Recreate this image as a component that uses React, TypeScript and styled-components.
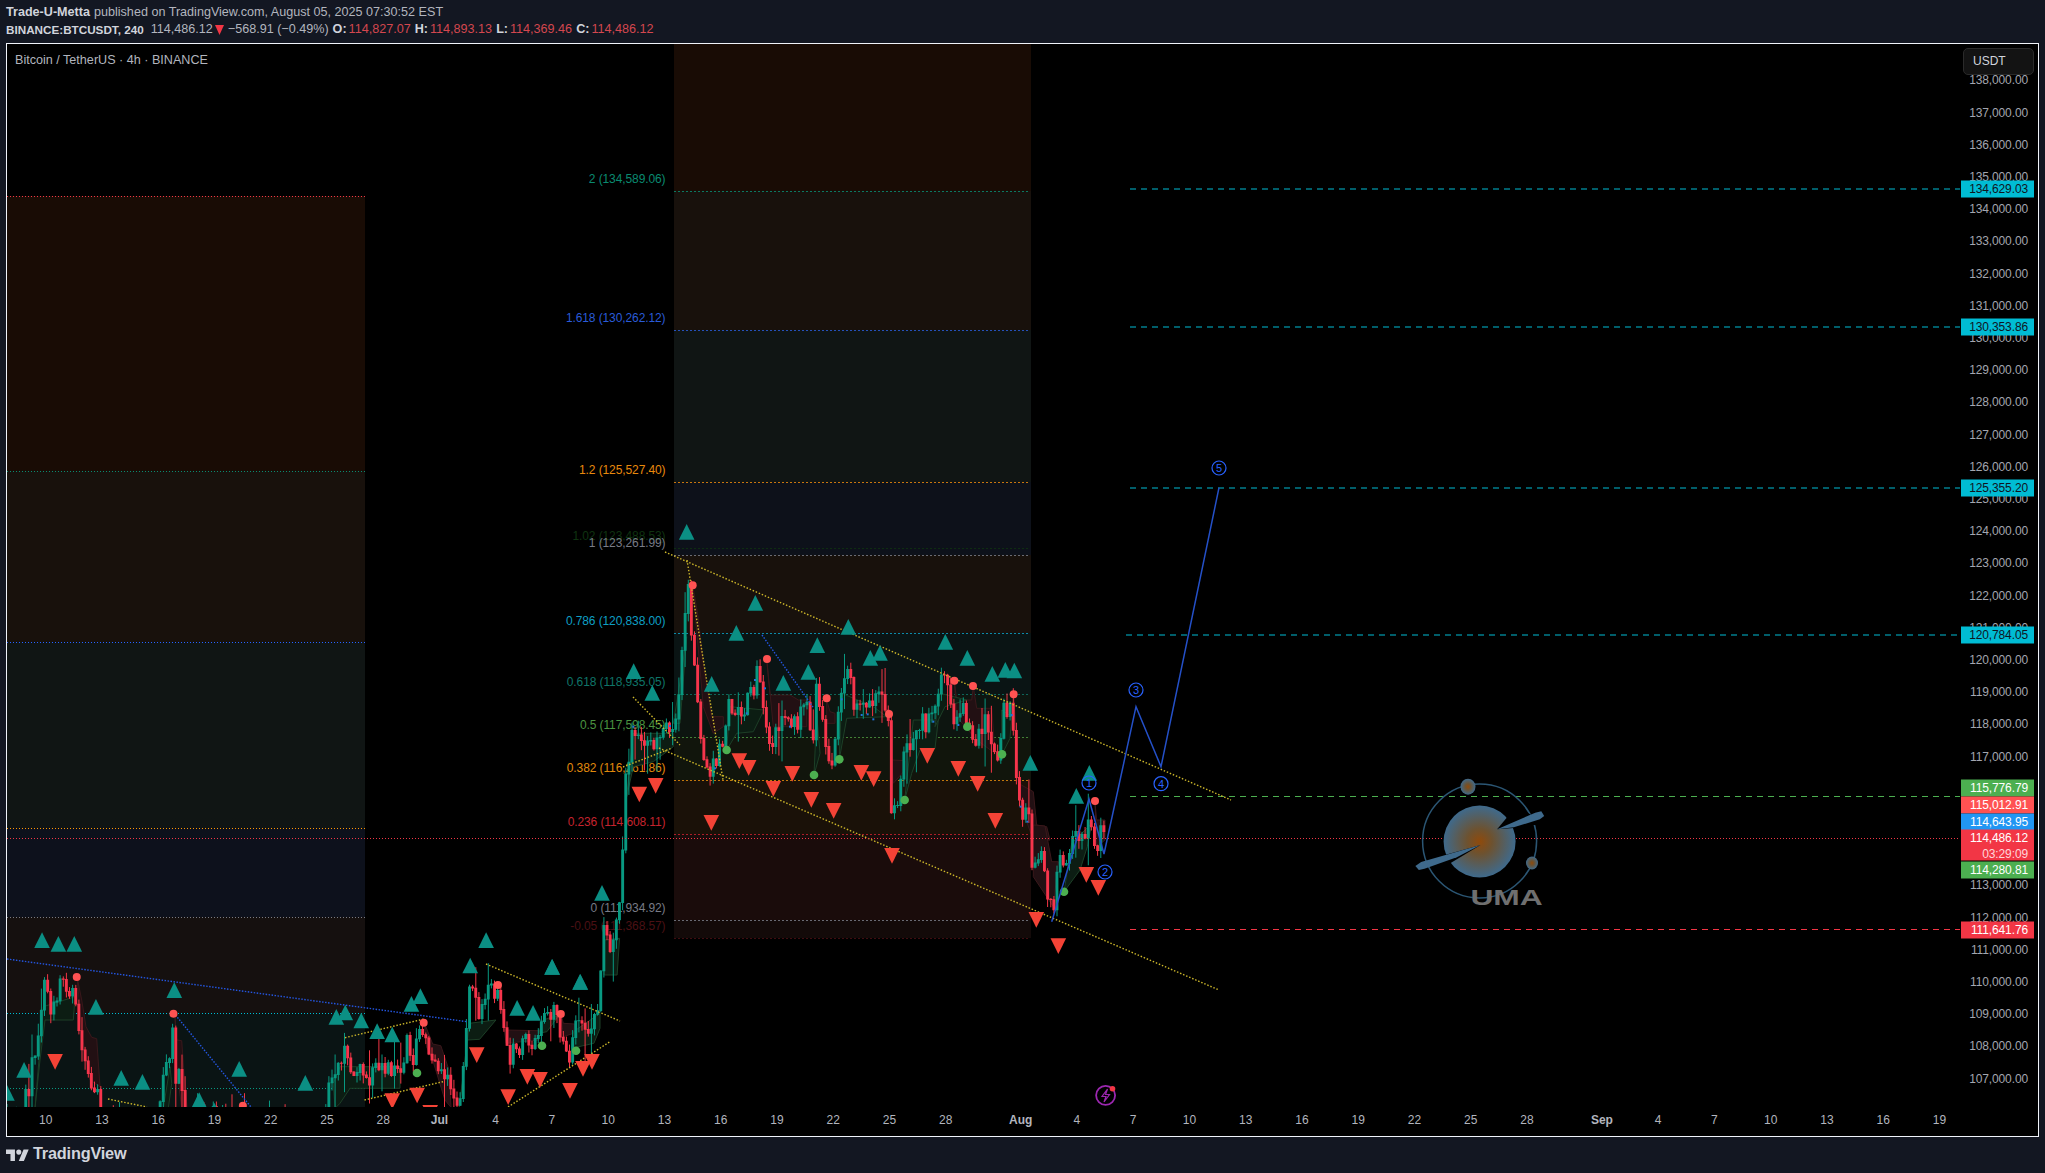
import React from "react";
import styled, { createGlobalStyle } from "styled-components";

type Pt = [number, number];

const PLOT = { left: 7, top: 44, width: 1953, height: 1063 };

// price scale of the axis, px on the page
const priceY = (p: number) => 112.5 + (137000 - p) * 0.0322;
// time scale, days counted from 10 Jun
const dayX = (d: number) => 45.7 + 18.75 * d;

const TEAL = "#0b8f84";
const RED = "#f44336";

// zoomed crops -> page coordinates
const fromA = (pts: Pt[]): Pt[] => pts.map(([x, y]) => [540 + x / 3, 520 + y / 3]);
const fromB = (pts: Pt[]): Pt[] => pts.map(([x, y]) => [x / 3, 800 + y / 3]);
const fromC = (pts: Pt[]): Pt[] => pts.map(([x, y]) => [x / 2.45, 900 + y / 3]);
const fromD = (pts: Pt[]): Pt[] => pts.map(([x, y]) => [1000 + x / 3, 640 + y / 3]);
const fromL = (pts: Pt[]): Pt[] => pts.map(([x, y]) => [1300 + x / 2.105, 740 + y / 3]);
const toPoints = (pts: Pt[]) => pts.map(([x, y]) => `${x.toFixed(1)},${y.toFixed(1)}`).join(" ");

const PATH: Pt[] = [
  [7, 1125], [20, 1110], [24, 1102], [30, 1085], [33, 1055], [40, 1028], [43, 973], [50, 1007], [55, 1000], [62, 973], [68, 1000],
  [75, 990], [78, 1022], [83, 1052], [90, 1083], [97, 1087], [100, 1112], [150, 1130], [160, 1107], [163, 1077], [168, 1065],
  [172, 1025], [175, 1085], [180, 1060], [183, 1112], [320, 1130], [327, 1103], [333, 1072], [340, 1055], [345, 1052],
  [353, 1068], [360, 1060], [368, 1083], [377, 1070], [390, 1066], [404, 1060], [408, 1035], [412, 1070], [418, 1030],
  [425, 1040], [433, 1065], [445, 1070], [452, 1100], [457, 1115], [461, 1100], [467, 1023], [470, 992], [480, 1015],
  [490, 990], [498, 1000], [508, 1060], [520, 1043], [539, 1043], [543, 1020], [555, 1003], [560, 1040], [571, 1058],
  [575, 1030], [590, 1030], [600, 1000], [602, 927], [607, 945], [614, 945], [618, 905], [622, 877], [624, 800], [628, 760],
  [630, 740], [640, 735], [655, 740], [673, 718], [680, 700], [683, 640], [687, 572], [691, 620], [695, 663], [703, 753],
  [710, 777], [717, 755], [722, 740], [728, 700], [733, 705], [740, 720], [743, 710], [753, 693], [758, 653], [767, 730],
  [773, 747], [780, 717], [793, 727], [807, 703], [812, 748], [817, 682], [827, 765], [833, 752], [840, 688], [848, 663],
  [853, 705], [868, 717], [870, 702], [880, 690], [888, 713], [890, 808], [897, 810], [902, 768], [905, 737], [913, 747],
  [918, 720], [933, 723], [940, 680], [947, 680], [955, 720], [965, 710], [973, 743], [980, 727], [988, 723], [997, 758],
  [1003, 710], [1010, 713], [1013, 715], [1018, 797], [1023, 817], [1028, 810], [1033, 877], [1038, 857], [1043, 857],
  [1048, 892], [1053, 912], [1055, 900], [1058, 867], [1065, 857], [1070, 843], [1076, 837], [1083, 832], [1088, 822],
  [1095, 845], [1098, 853], [1102, 827], [1106, 838],
];

const interpolate = (x: number) => {
  for (let i = 1; i < PATH.length; i++) {
    if (x <= PATH[i][0]) {
      const [x0, y0] = PATH[i - 1];
      const [x1, y1] = PATH[i];
      return y0 + ((y1 - y0) * (x - x0)) / (x1 - x0);
    }
  }
  return PATH[PATH.length - 1][1];
};

let seed = 4127;
const rnd = () => {
  seed = (seed * 16807) % 2147483647;
  return seed / 2147483647;
};

const buildCandles = () => {
  const up = { body: "", wick: "" };
  const down = { body: "", wick: "" };
  let prev = interpolate(7);
  for (let x = 7; x <= 1106; x += 3.125) {
    const end = x >= 1104;
    const close = end ? 838 : interpolate(x) + (rnd() - 0.5) * 22;
    const top = Math.min(prev, close);
    const bottom = Math.max(prev, close) + 0.8;
    const long = rnd() > 0.78;
    const hi = top - rnd() * (long ? 28 : 8);
    const lo = bottom + rnd() * (long ? 34 : 9);
    const side = close < prev ? up : down;
    side.body += `M${(x - 1.45).toFixed(1)} ${top.toFixed(1)}h2.9V${bottom.toFixed(1)}h-2.9z`;
    side.wick += `M${x.toFixed(1)} ${hi.toFixed(1)}V${lo.toFixed(1)}`;
    prev = close;
  }
  return { up, down };
};
const CANDLES = buildCandles();

const RED_RIBBONS: Pt[][] = [
  fromB([[232, 535], [245, 600], [258, 680], [275, 712], [290, 716], [300, 860], [270, 840], [245, 700]]),
  fromB([[525, 650], [530, 720], [545, 722], [555, 860], [562, 925], [545, 925], [530, 800]]),
  fromC([[1040, 370], [1060, 432], [1080, 437], [1100, 510], [1105, 622], [1090, 600], [1060, 480], [1045, 440]]),
  fromC([[1222, 260], [1238, 390], [1320, 392], [1320, 420], [1240, 430]]),
  fromC([[1375, 345], [1380, 370], [1408, 372], [1405, 400], [1380, 410]]),
  fromA([[458, 196], [475, 295], [490, 430], [515, 590], [550, 590], [550, 620], [520, 640], [490, 560]]),
  fromA([[680, 417], [690, 525], [750, 525], [775, 540], [800, 540], [800, 620], [700, 620]]),
  fromA([[860, 540], [870, 575], [885, 580], [885, 610], [860, 610]]),
  fromA([[1047, 582], [1055, 720], [1095, 722], [1095, 750], [1060, 790]]),
  fromA([[1243, 482], [1250, 540], [1295, 540], [1300, 500], [1310, 565], [1355, 565], [1365, 700], [1310, 660], [1250, 590]]),
  fromA([[1421, 523], [1435, 790], [1480, 815], [1490, 915], [1520, 920], [1530, 960], [1480, 960], [1440, 850]]),
  fromD([[100, 555], [135, 558], [155, 665], [175, 665], [160, 800], [100, 710]]),
  fromD([[285, 490], [290, 540], [315, 540], [315, 600], [290, 620]]),
];

const GREEN_RIBBONS: Pt[][] = [
  fromB([[105, 925], [120, 780], [135, 660], [220, 660], [225, 590], [130, 620]]),
  fromB([[490, 925], [510, 800], [515, 850], [505, 925]]),
  fromB([[1005, 925], [1020, 910], [1050, 865], [1200, 865], [1200, 800], [1020, 800], [1000, 850]]),
  fromC([[1125, 622], [1140, 490], [1145, 420], [1175, 418], [1215, 360], [1150, 370]]),
  fromC([[1320, 400], [1340, 395], [1370, 345], [1330, 360]]),
  fromC([[1400, 445], [1455, 430], [1470, 385], [1470, 340], [1405, 395]]),
  fromC([[1480, 225], [1512, 225], [1518, 115], [1480, 120]]),
  fromA([[260, 830], [280, 740], [340, 725], [400, 680], [400, 640], [280, 640]]),
  fromA([[420, 610], [440, 350], [415, 520], [400, 610]]),
  fromA([[560, 690], [590, 640], [640, 635], [672, 570], [570, 560]]),
  fromA([[822, 765], [840, 700], [830, 580]]),
  fromA([[898, 718], [920, 595], [1040, 590], [1000, 560], [905, 520]]),
  fromA([[1094, 840], [1115, 760], [1140, 690], [1185, 685], [1195, 600], [1120, 600]]),
  fromA([[1185, 620], [1215, 560], [1280, 540], [1200, 520]]),
  fromA([[1386, 703], [1410, 655], [1415, 590], [1385, 570]]),
  fromD([[192, 755], [240, 690], [262, 620], [275, 550], [215, 610]]),
];

// x, top of triangle
const UP_MARKS: Pt[] = [
  ...fromA([[440, 12], [646, 225], [589, 315], [832, 352], [925, 297], [1020, 375], [991, 390], [1216, 342], [1282, 390], [1357, 438],
    [1396, 426], [1423, 428], [805, 432], [730, 465], [515, 468], [281, 430], [337, 495], [1471, 705]]),
  ...fromD([[268, 375], [229, 444]]),
  [602, 885], [552, 959], [580, 974],
  ...fromC([[103, 97], [143, 108], [182, 108], [235, 297], [427, 247], [59, 486], [297, 510], [349, 522], [17, 555], [488, 577],
    [525, 608], [586, 483], [748, 525], [824, 327], [846, 314], [885, 338], [924, 370], [961, 380], [1008, 288], [1030, 265],
    [1152, 173], [1191, 97], [1267, 300], [1306, 315], [1353, 177], [1422, 222]]),
];

const DOWN_MARKS: Pt[] = [
  ...fromA([[598, 700], [626, 720], [757, 738], [700, 783], [814, 816], [881, 849], [964, 735], [1001, 754], [1162, 684], [1255, 723],
    [1313, 768], [1366, 879], [514, 885], [298, 800], [347, 774]]),
  ...fromD([[109, 816], [259, 681], [295, 720], [175, 895]]),
  [892, 848], [592, 1054], [583, 1061], [570, 1083], [540, 1072],
  ...fromC([[135, 462], [961, 580], [1022, 563], [1054, 615], [1168, 442], [1292, 507], [1245, 568]]),
];

const RED_DOTS: Pt[] = [
  ...fromA([[458, 196], [681, 417], [860, 535], [1047, 582], [1243, 482], [1299, 498], [1421, 523]]),
  [1095, 801],
  ...fromC([[188, 231], [425, 341], [595, 617], [1038, 368], [1220, 255], [1374, 342]]),
];

const GREEN_DOTS: Pt[] = [
  ...fromA([[560, 690], [822, 765], [898, 718], [1094, 840], [1282, 620], [1386, 703]]),
  [1064, 891.7], [417, 1073], [542, 1045.7], [576, 1050.7],
];

const BLUE_TICKS: Pt[] = fromA([[280, 620], [390, 618], [525, 745], [620, 580], [645, 480], [675, 505], [750, 620], [905, 538], [965, 585],
  [983, 583], [1000, 598], [1180, 605], [1255, 615], [1415, 585], [1442, 860], [1462, 905]]);

const YELLOW_LINES: [number, number, number, number][] = [
  [665, 552, 1231, 800],
  [659, 748, 1219, 990],
  [633, 697, 680, 745],
  [687, 560, 723, 780],
  [623, 767, 672, 748],
  [486, 964, 620, 1021],
  [508, 1107, 610, 1041.7],
  [345, 1037.7, 424, 1019],
  [364.5, 1100, 443, 1081.7],
  [108, 1099, 147, 1107],
];

const BLUE_LINES: [number, number, number, number][] = [
  [7, 959, 467, 1021.7],
  [175.5, 1015, 251, 1107],
  [762, 635, 813, 707],
];

const FIB_BANDS = [
  { from: 44, to: 191, fill: "#190c05" },
  { from: 191, to: 330, fill: "#18110c" },
  { from: 330, to: 482, fill: "#101514" },
  { from: 482, to: 555, fill: "#0d111a" },
  { from: 555, to: 633, fill: "#18110c" },
  { from: 633, to: 694, fill: "#0a1414" },
  { from: 694, to: 737, fill: "#0d1510" },
  { from: 737, to: 780, fill: "#11150c" },
  { from: 780, to: 834, fill: "#1a1108" },
  { from: 834, to: 920, fill: "#1a0c0b" },
  { from: 920, to: 938, fill: "#130a09" },
];

const FIB_LEVELS = [
  { y: 191.5, text: "2 (134,589.06)", color: "#0a8a70" },
  { y: 330.5, text: "1.618 (130,262.12)", color: "#2a5bd8" },
  { y: 482.5, text: "1.2 (125,527.40)", color: "#e8890c" },
  { y: 548.5, text: "1.02 (123,488.53)", color: "#0f3310" },
  { y: 555.5, text: "1 (123,261.99)", color: "#787b86" },
  { y: 633.5, text: "0.786 (120,838.00)", color: "#0e9fc4" },
  { y: 694.5, text: "0.618 (118,935.05)", color: "#0f7468" },
  { y: 737.5, text: "0.5 (117,598.45)", color: "#4a9440" },
  { y: 780.5, text: "0.382 (116,261.86)", color: "#e08a0c" },
  { y: 834.5, text: "0.236 (114,608.11)", color: "#c5232e" },
  { y: 920.5, text: "0 (111,934.92)", color: "#787b86" },
  { y: 938.5, text: "-0.05 (111,368.57)", color: "#4b1014" },
];

const OLD_BANDS = [
  { from: 196, to: 471, fill: "#190c05" },
  { from: 471, to: 642, fill: "#18110c" },
  { from: 642, to: 828, fill: "#101514" },
  { from: 828, to: 917, fill: "#0d111c" },
  { from: 917, to: 1013, fill: "#15100f" },
  { from: 1013, to: 1107, fill: "#0a1414" },
];

const OLD_LINES = [
  { y: 196.5, color: "#f23645" },
  { y: 471.5, color: "#0a8a70" },
  { y: 642.5, color: "#2962ff" },
  { y: 828.5, color: "#ff9800" },
  { y: 917.5, color: "#787b86" },
  { y: 1013.5, color: "#00bcd4" },
  { y: 1088.5, color: "#089981" },
];

const TARGETS = [
  { y: 189, x: 1130, color: "#00bcd4" },
  { y: 327, x: 1130, color: "#00bcd4" },
  { y: 488, x: 1130, color: "#00bcd4" },
  { y: 635, x: 1126, color: "#00bcd4" },
  { y: 796.5, x: 1130, color: "#4caf50" },
  { y: 929.5, x: 1130, color: "#f23645" },
];

const WAVE: Pt[] = [[1051.7, 921.7], [1089, 799], [1104, 854], [1136, 706.7], [1161, 766.7], [1219, 487.7]];
const WAVE_LABELS: { x: number; y: number; n: string }[] = [
  { x: 1089, y: 783, n: "1" },
  { x: 1105, y: 872, n: "2" },
  { x: 1136, y: 690, n: "3" },
  { x: 1161, y: 783.7, n: "4" },
  { x: 1219, y: 468, n: "5" },
];

const TIME_TICKS: { d: number; label: string; month?: boolean }[] = [
  { d: 0, label: "10" }, { d: 3, label: "13" }, { d: 6, label: "16" }, { d: 9, label: "19" }, { d: 12, label: "22" },
  { d: 15, label: "25" }, { d: 18, label: "28" }, { d: 21, label: "Jul", month: true }, { d: 24, label: "4" }, { d: 27, label: "7" },
  { d: 30, label: "10" }, { d: 33, label: "13" }, { d: 36, label: "16" }, { d: 39, label: "19" }, { d: 42, label: "22" },
  { d: 45, label: "25" }, { d: 48, label: "28" }, { d: 52, label: "Aug", month: true }, { d: 55, label: "4" }, { d: 58, label: "7" },
  { d: 61, label: "10" }, { d: 64, label: "13" }, { d: 67, label: "16" }, { d: 70, label: "19" }, { d: 73, label: "22" },
  { d: 76, label: "25" }, { d: 79, label: "28" }, { d: 83, label: "Sep", month: true }, { d: 86, label: "4" }, { d: 89, label: "7" },
  { d: 92, label: "10" }, { d: 95, label: "13" }, { d: 98, label: "16" }, { d: 101, label: "19" },
];

// 116k, 115k and 114k sit fully under the price tags
const PRICE_TICKS = Array.from({ length: 32 }, (_, i) => 138000 - i * 1000).filter((p) => p < 114000 || p > 116000);

const PRICE_TAGS = [
  { y: 189, text: "134,629.03", bg: "#00bcd4", fg: "#10151f" },
  { y: 327, text: "130,353.86", bg: "#00bcd4", fg: "#10151f" },
  { y: 488, text: "125,355.20", bg: "#00bcd4", fg: "#10151f" },
  { y: 635, text: "120,784.05", bg: "#00bcd4", fg: "#10151f" },
  { y: 787.5, text: "115,776.79", bg: "#4caf50", fg: "#fff" },
  { y: 804.5, text: "115,012.91", bg: "#ff5252", fg: "#fff" },
  { y: 821.5, text: "114,643.95", bg: "#2196f3", fg: "#fff" },
  { y: 869.5, text: "114,280.81", bg: "#4caf50", fg: "#fff" },
  { y: 929.5, text: "111,641.76", bg: "#f23645", fg: "#fff" },
];

const GlobalStyle = createGlobalStyle`
  html, body {
    margin: 0;
    padding: 0;
    background: #131722;
  }
  body {
    font-family: "Liberation Sans", Arial, sans-serif;
    font-size: 12px;
  }
`;

const Page = styled.div`
  width: 2045px;
  height: 1173px;
  display: flex;
  flex-direction: column;
  background: #131722;
  overflow: hidden;
`;

const Header = styled.header`
  height: 43px;
  box-sizing: border-box;
  padding: 4px 0 0 6px;
  display: flex;
  flex-direction: column;
`;

const HeaderLine = styled.div`
  height: 17px;
  line-height: 17px;
  display: flex;
  align-items: center;
  gap: 4px;
  font-size: 12.6px;
  color: #b2b5be;
  white-space: nowrap;
`;

const Strong = styled.span<{ $small?: boolean }>`
  font-weight: 700;
  color: #d1d4dc;
  font-size: ${({ $small }) => ($small ? "11.7px" : "inherit")};
  margin-right: ${({ $small }) => ($small ? "3px" : "0")};
`;

const Group = styled.span`
  display: inline-flex;
  align-items: center;
  gap: 2px;
`;

const Quote = styled.span`
  color: #d4474f;
`;

const Frame = styled.main`
  position: relative;
  margin-left: 6px;
  width: 2033px;
  height: 1094px;
  box-sizing: border-box;
  border: 1px solid #f0f3fa;
  background: #000;
  display: flex;
`;

const ChartColumn = styled.div`
  width: ${PLOT.width}px;
  display: flex;
  flex-direction: column;
`;

const Plot = styled.svg`
  display: block;
  flex: none;
  width: ${PLOT.width}px;
  height: ${PLOT.height}px;
  font-family: "Liberation Sans", Arial, sans-serif;
  font-size: 12px;
  letter-spacing: -0.1px;
`;

const SymbolTitle = styled.div`
  position: absolute;
  left: 8px;
  top: 9px;
  color: #b2b5be;
  font-size: 12.6px;
  line-height: 15px;
`;

const TimeAxis = styled.div`
  position: relative;
  flex: 1;
`;

const TimeTick = styled.span<{ $month?: boolean }>`
  position: absolute;
  top: 6px;
  transform: translateX(-50%);
  color: #b2b5be;
  line-height: 15px;
  font-weight: ${({ $month }) => ($month ? 700 : 400)};
`;

const PriceAxis = styled.div`
  position: relative;
  flex: 1;
  overflow: hidden;
`;

const PriceTick = styled.span`
  position: absolute;
  right: 10px;
  transform: translateY(-50%);
  color: #a3a6af;
  line-height: 15px;
  letter-spacing: -0.12px;
`;

const PriceTag = styled.div<{ $bg: string; $fg: string }>`
  position: absolute;
  left: 1px;
  width: 73px;
  box-sizing: border-box;
  padding-right: 6px;
  text-align: right;
  background: ${({ $bg }) => $bg};
  color: ${({ $fg }) => $fg};
  line-height: 17px;
  letter-spacing: -0.12px;
  transform: translateY(-50%);
`;

const Countdown = styled.div`
  color: #ffd5da;
  line-height: 14px;
`;

const CurrencyButton = styled.div`
  position: absolute;
  left: 3px;
  top: 4px;
  width: 71px;
  height: 27px;
  box-sizing: border-box;
  padding-left: 9px;
  line-height: 24px;
  background: #131313;
  border: 1.5px solid #2a2a2a;
  border-radius: 5px;
  color: #d1d4dc;
`;

const Footer = styled.footer`
  flex: 1;
  display: flex;
  align-items: center;
  gap: 4px;
  padding: 0 0 3px 6px;
  color: #d1d4dc;
`;

const LogoText = styled.span`
  font-size: 16.3px;
  font-weight: 700;
  letter-spacing: -0.2px;
`;

const Triangle = ({ x, y, up }: { x: number; y: number; up: boolean }) => {
  const h = 15.7;
  const w = 7.8;
  const pts = up
    ? `${x},${y} ${x + w},${y + h} ${x - w},${y + h}`
    : `${x - w},${y} ${x + w},${y} ${x},${y + h}`;
  return <polygon points={pts} fill={up ? TEAL : RED} />;
};

function UmaLogo() {
  return (
    <g>
      <defs>
        <radialGradient id="umaCore">
          <stop offset="0%" stopColor="#8f4a0c" />
          <stop offset="35%" stopColor="#6d5230" />
          <stop offset="100%" stopColor="#3f6a8c" />
        </radialGradient>
      </defs>
      <circle cx={1479.6} cy={841} r={57} fill="none" stroke="#2b5674" strokeWidth={1.5} />
      <ellipse cx={1479.6} cy={841.5} rx={36} ry={36} fill="url(#umaCore)" />
      <polygon points={toPoints(fromL([[415, 268], [436, 232], [470, 212], [520, 250], [450, 264]]))} fill="#000" />
      <polygon points={toPoints(fromL([[380, 315], [318, 368], [296, 380], [288, 352]]))} fill="#000" />
      <polygon points={toPoints(fromL([[415, 268], [495, 218], [508, 214], [514, 228], [505, 238], [450, 262]]))} fill="#3f6a8c" />
      <polygon points={toPoints(fromL([[380, 315], [255, 366], [243, 378], [250, 390], [262, 386], [330, 352]]))} fill="#3f6a8c" />
      <ellipse cx={1468} cy={786.7} rx={7.5} ry={8} fill="url(#umaCore)" />
      <ellipse cx={1532} cy={863} rx={6} ry={6.5} fill="url(#umaCore)" />
      <text x={1470.5} y={905} fill="#6f6f6f" fontSize={22} fontWeight={700} textLength={72} lengthAdjust="spacingAndGlyphs">
        UMA
      </text>
    </g>
  );
}

function Chart() {
  return (
    <Plot viewBox={`${PLOT.left} ${PLOT.top} ${PLOT.width} ${PLOT.height}`}>
      {OLD_BANDS.map((b) => (
        <rect key={b.from} x={7} y={b.from} width={358} height={b.to - b.from} fill={b.fill} />
      ))}
      {OLD_LINES.map((l) => (
        <line key={l.y} x1={7} x2={365} y1={l.y} y2={l.y} stroke={l.color} strokeDasharray="1 2" />
      ))}
      {FIB_BANDS.map((b) => (
        <rect key={b.from} x={674} y={b.from} width={357} height={b.to - b.from} fill={b.fill} />
      ))}
      {FIB_LEVELS.map((l) => (
        <g key={l.text}>
          <line x1={674} x2={1029} y1={l.y} y2={l.y} stroke={l.color} strokeDasharray="2 2" opacity={0.85} />
          <text x={665.5} y={l.y - 8.5} textAnchor="end" fill={l.color}>
            {l.text}
          </text>
        </g>
      ))}

      {TARGETS.map((t) => (
        <line key={t.y} x1={t.x} x2={1960} y1={t.y} y2={t.y} stroke={t.color} strokeDasharray="6 5" />
      ))}

      {RED_RIBBONS.map((pts, i) => (
        <polygon key={i} points={toPoints(pts)} fill="#221013" stroke="#3a181b" />
      ))}
      {GREEN_RIBBONS.map((pts, i) => (
        <polygon key={i} points={toPoints(pts)} fill="#0c1d13" stroke="#1d3f27" />
      ))}

      <path d={CANDLES.up.wick} stroke="#089981" fill="none" />
      <path d={CANDLES.down.wick} stroke="#f23645" fill="none" />
      <path d={CANDLES.up.body} fill="#089981" />
      <path d={CANDLES.down.body} fill="#f7354c" />

      {BLUE_TICKS.map(([x, y], i) => (
        <rect key={i} x={x - 1} y={y - 1} width={2} height={2} fill="#2273d8" />
      ))}

      {BLUE_LINES.map((l, i) => (
        <line key={i} x1={l[0]} y1={l[1]} x2={l[2]} y2={l[3]} stroke="#2456e0" strokeWidth={1.4} strokeDasharray="1.5 1.5" />
      ))}
      {YELLOW_LINES.map((l, i) => (
        <line key={i} x1={l[0]} y1={l[1]} x2={l[2]} y2={l[3]} stroke="#cdb72a" strokeWidth={1.4} strokeDasharray="1.5 1.8" />
      ))}

      <line x1={7} x2={1960} y1={838.5} y2={838.5} stroke="#f23645" strokeDasharray="1 2" />

      {UP_MARKS.map(([x, y], i) => (
        <Triangle key={i} x={x} y={y} up />
      ))}
      {DOWN_MARKS.map(([x, y], i) => (
        <Triangle key={i} x={x} y={y} up={false} />
      ))}
      {RED_DOTS.map(([x, y], i) => (
        <circle key={i} cx={x} cy={y} r={4} fill="#ff5252" />
      ))}
      {GREEN_DOTS.map(([x, y], i) => (
        <circle key={i} cx={x} cy={y} r={4.3} fill="#4caf50" />
      ))}

      <polyline points={toPoints(WAVE)} fill="none" stroke="#2450c8" strokeWidth={1.5} />
      {WAVE_LABELS.map((w) => (
        <g key={w.n}>
          <circle cx={w.x} cy={w.y} r={7} fill="none" stroke="#2962ff" strokeWidth={1.2} />
          <text x={w.x} y={w.y + 4} textAnchor="middle" fontSize={11} fill="#2962ff">
            {w.n}
          </text>
        </g>
      ))}

      <UmaLogo />

      <circle cx={1105.6} cy={1095.3} r={9.5} fill="none" stroke="#9c27b0" strokeWidth={1.8} />
      <path d="M1107.5 1089 l-5.5 7.5 h4 l-2 5.5 l5.5 -7.5 h-4 z" fill="none" stroke="#9c27b0" strokeWidth={1.2} />
      <circle cx={1112.5} cy={1088.7} r={2.8} fill="#f23645" />
    </Plot>
  );
}

export default function App() {
  return (
    <Page>
      <GlobalStyle />
      <Header>
        <HeaderLine>
          <Strong>Trade-U-Metta</Strong>
          <span>published on TradingView.com, August 05, 2025 07:30:52 EST</span>
        </HeaderLine>
        <HeaderLine>
          <Strong $small>BINANCE:BTCUSDT, 240</Strong>
          <Group>
            114,486.12
            <svg width="9" height="10" viewBox="0 0 9 10">
              <polygon points="0,0 9,0 4.5,10" fill="#f23645" />
            </svg>
          </Group>
          <span>−568.91 (−0.49%)</span>
          <Group>
            <Strong>O:</Strong>
            <Quote>114,827.07</Quote>
          </Group>
          <Group>
            <Strong>H:</Strong>
            <Quote>114,893.13</Quote>
          </Group>
          <Group>
            <Strong>L:</Strong>
            <Quote>114,369.46</Quote>
          </Group>
          <Group>
            <Strong>C:</Strong>
            <Quote>114,486.12</Quote>
          </Group>
        </HeaderLine>
      </Header>
      <Frame>
        <ChartColumn>
          <Chart />
          <TimeAxis>
            {TIME_TICKS.map((t) => (
              <TimeTick key={t.d} $month={t.month} style={{ left: dayX(t.d) - PLOT.left }}>
                {t.label}
              </TimeTick>
            ))}
          </TimeAxis>
        </ChartColumn>
        <PriceAxis>
          {PRICE_TICKS.map((p) => (
            <PriceTick key={p} style={{ top: priceY(p) - PLOT.top }}>
              {p.toLocaleString("en-US")}.00
            </PriceTick>
          ))}
          {PRICE_TAGS.map((t) => (
            <PriceTag key={t.text} $bg={t.bg} $fg={t.fg} style={{ top: t.y - PLOT.top }}>
              {t.text}
            </PriceTag>
          ))}
          <PriceTag $bg="#f23645" $fg="#fff" style={{ top: 845.2 - PLOT.top }}>
            114,486.12
            <Countdown>03:29:09</Countdown>
          </PriceTag>
          <CurrencyButton>USDT</CurrencyButton>
        </PriceAxis>
        <SymbolTitle>Bitcoin / TetherUS · 4h · BINANCE</SymbolTitle>
      </Frame>
      <Footer>
        <svg width="23" height="18" viewBox="0 0 36 28" fill="currentColor">
          <path d="M14 25H7V14H0V7h14v18zM28 25h-8l7.5-18h8L28 25z" />
          <circle cx="20" cy="11" r="4" />
        </svg>
        <LogoText>TradingView</LogoText>
      </Footer>
    </Page>
  );
}
